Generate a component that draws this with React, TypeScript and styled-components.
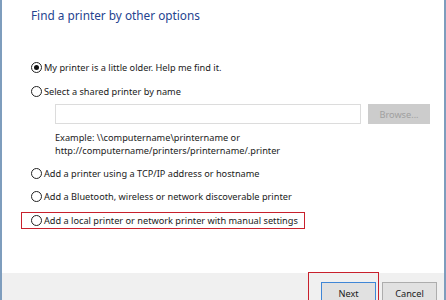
import React from "react";
import styled, { createGlobalStyle } from "styled-components";

const GlobalStyle = createGlobalStyle`
  html, body {
    margin: 0;
    padding: 0;
    background: #ffffff;
  }
  * {
    box-sizing: border-box;
  }
`;

const Window = styled.div`
  width: 446px;
  height: 300px;
  display: flex;
  flex-direction: column;
  border-left: 2px solid #7e9dbd;
  border-right: 2px solid #7e9dbd;
  background: #fff;
  font-family: "Noto Sans", "Liberation Sans", sans-serif;
  font-size: 9.2px;
  color: #1a1a1a;
  overflow: hidden;
`;

const Content = styled.div`
  flex: 1;
  display: flex;
  flex-direction: column;
  padding: 3px 0 0 29px;
`;

const Title = styled.h1`
  margin: 0;
  font-weight: 400;
  font-size: 11.8px;
  color: #24438f;
  line-height: 24px;
`;

const Options = styled.div`
  display: flex;
  flex-direction: column;
  margin-top: 32px;
`;

const Row = styled.label<{ $gap?: number }>`
  display: flex;
  align-items: center;
  gap: 2px;
  height: 16px;
  margin-bottom: ${(p) => p.$gap ?? 8}px;
  white-space: nowrap;
`;

const Highlight = styled.div`
  position: relative;
`;

const RedBox = styled.div`
  position: absolute;
  left: -10px;
  top: 0;
  width: 284px;
  height: 17px;
  border: 1px solid #c8202c;
  pointer-events: none;
`;

const Radio = styled.span<{ $checked?: boolean }>`
  width: 11px;
  height: 11px;
  border-radius: 50%;
  border: 1px solid #222;
  display: inline-flex;
  align-items: center;
  justify-content: center;
  flex-shrink: 0;
  &::after {
    content: "";
    width: 5px;
    height: 5px;
    border-radius: 50%;
    background: ${(p) => (p.$checked ? "#111" : "transparent")};
  }
`;

const Indented = styled.div`
  display: flex;
  flex-direction: column;
  padding-left: 24px;
  margin-bottom: 8px;
`;

const InputRow = styled.div`
  display: flex;
  gap: 7px;
  margin-top: 5px;
  margin-bottom: 7px;
`;

const TextBox = styled.div`
  width: 306px;
  height: 20px;
  border: 1px solid #dcdcdc;
  background: #fff;
`;

const BrowseButton = styled.div`
  width: 62px;
  height: 20px;
  background: #cccccc;
  color: #a0a0a0;
  display: flex;
  align-items: center;
  justify-content: center;
`;

const Example = styled.div`
  line-height: 13px;
`;

const Footer = styled.div`
  height: 27px;
  background: #f0f0f0;
  display: flex;
  justify-content: flex-end;
  align-items: flex-start;
  gap: 6px;
  padding: 9px 7px 0 0;
`;

const Button = styled.div<{ $primary?: boolean }>`
  position: relative;
  width: 55px;
  height: 22px;
  background: #e1e1e1;
  border: 1px solid ${(p) => (p.$primary ? "#3f86d6" : "#adadad")};
  display: flex;
  align-items: center;
  justify-content: center;
`;

const ButtonMark = styled.div`
  position: absolute;
  left: -14px;
  top: -11px;
  width: 71px;
  height: 40px;
  border: 1px solid #c8202c;
  pointer-events: none;
`;

export default function App() {
  return (
    <>
      <GlobalStyle />
      <Window>
        <Content>
          <Title>Find a printer by other options</Title>
          <Options>
            <Row>
              <Radio $checked />
              My printer is a little older. Help me find it.
            </Row>
            <Row $gap={0}>
              <Radio />
              Select a shared printer by name
            </Row>
            <Indented>
              <InputRow>
                <TextBox />
                <BrowseButton>Browse...</BrowseButton>
              </InputRow>
              <Example>Example: \\computername\printername or</Example>
              <Example>http://computername/printers/printername/.printer</Example>
            </Indented>
            <Row $gap={7}>
              <Radio />
              Add a printer using a TCP/IP address or hostname
            </Row>
            <Row>
              <Radio />
              Add a Bluetooth, wireless or network discoverable printer
            </Row>
            <Highlight>
              <RedBox />
              <Row>
                <Radio />
                Add a local printer or network printer with manual settings
              </Row>
            </Highlight>
          </Options>
        </Content>
        <Footer>
          <Button $primary>
            <ButtonMark />
            Next
          </Button>
          <Button>Cancel</Button>
        </Footer>
      </Window>
    </>
  );
}
